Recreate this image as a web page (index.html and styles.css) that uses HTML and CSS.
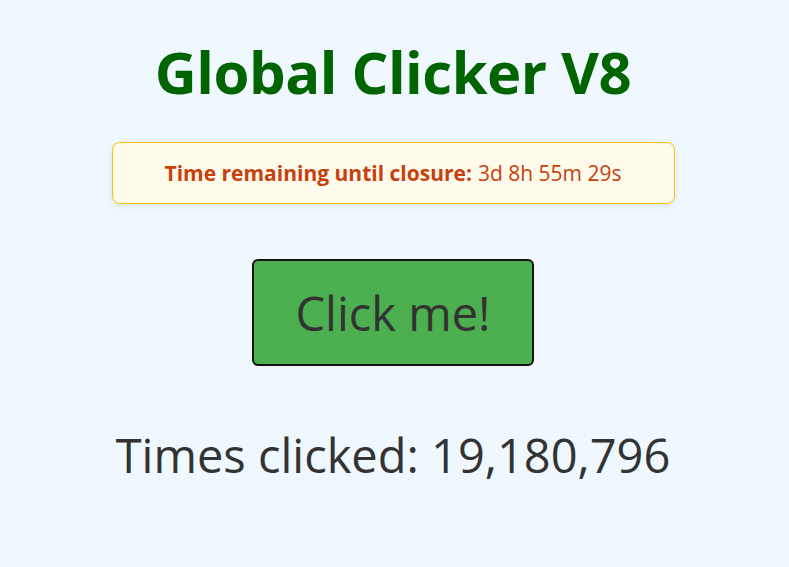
FILE: index.html
```html
<!DOCTYPE html>
<html lang="en">
<head>
<meta charset="utf-8">
<title>Global Clicker V8</title>
<link rel="stylesheet" href="styles.css">
</head>
<body>
<main class="page">
  <h1 class="title">Global Clicker V8</h1>
  <div class="countdown"><strong>Time remaining until closure:</strong> 3d 8h 55m 29s</div>
  <button class="click-btn" type="button">Click me!</button>
  <p class="counter">Times clicked: 19,180,796</p>
</main>
</body>
</html>
```

FILE: styles.css
```css
html, body {
  margin: 0;
  padding: 0;
}
body {
  background: #f0f8ff;
  font-family: "Open Sans", "Noto Sans", sans-serif;
  color: #333;
}
.page {
  display: flex;
  flex-direction: column;
  align-items: center;
  padding-top: 38px;
  padding-right: 3px;
}
.title {
  margin: 0;
  font-size: 58px;
  font-weight: 700;
  color: #006400;
  line-height: 68px;
  letter-spacing: -0.5px;
}
.countdown {
  box-sizing: border-box;
  width: 563px;
  height: 62px;
  margin-top: 36px;
  display: flex;
  align-items: center;
  justify-content: center;
  gap: 6px;
  background: #fffbea;
  border: 1px solid #ffc107;
  border-radius: 8px;
  box-shadow: 0 2px 6px rgba(0,0,0,0.08);
  color: #c8400e;
  font-size: 21px;
}
.countdown strong {
  font-weight: 700;
}
.click-btn {
  box-sizing: border-box;
  width: 282px;
  height: 107px;
  margin-top: 55px;
  background: #4caf50;
  border: 2px solid #111;
  border-radius: 6px;
  color: #333;
  font-family: "Open Sans", "Noto Sans", sans-serif;
  font-size: 47px;
  padding: 0;
}
.counter {
  margin: 59px 0 0;
  font-size: 47px;
  line-height: 60px;
}
```
